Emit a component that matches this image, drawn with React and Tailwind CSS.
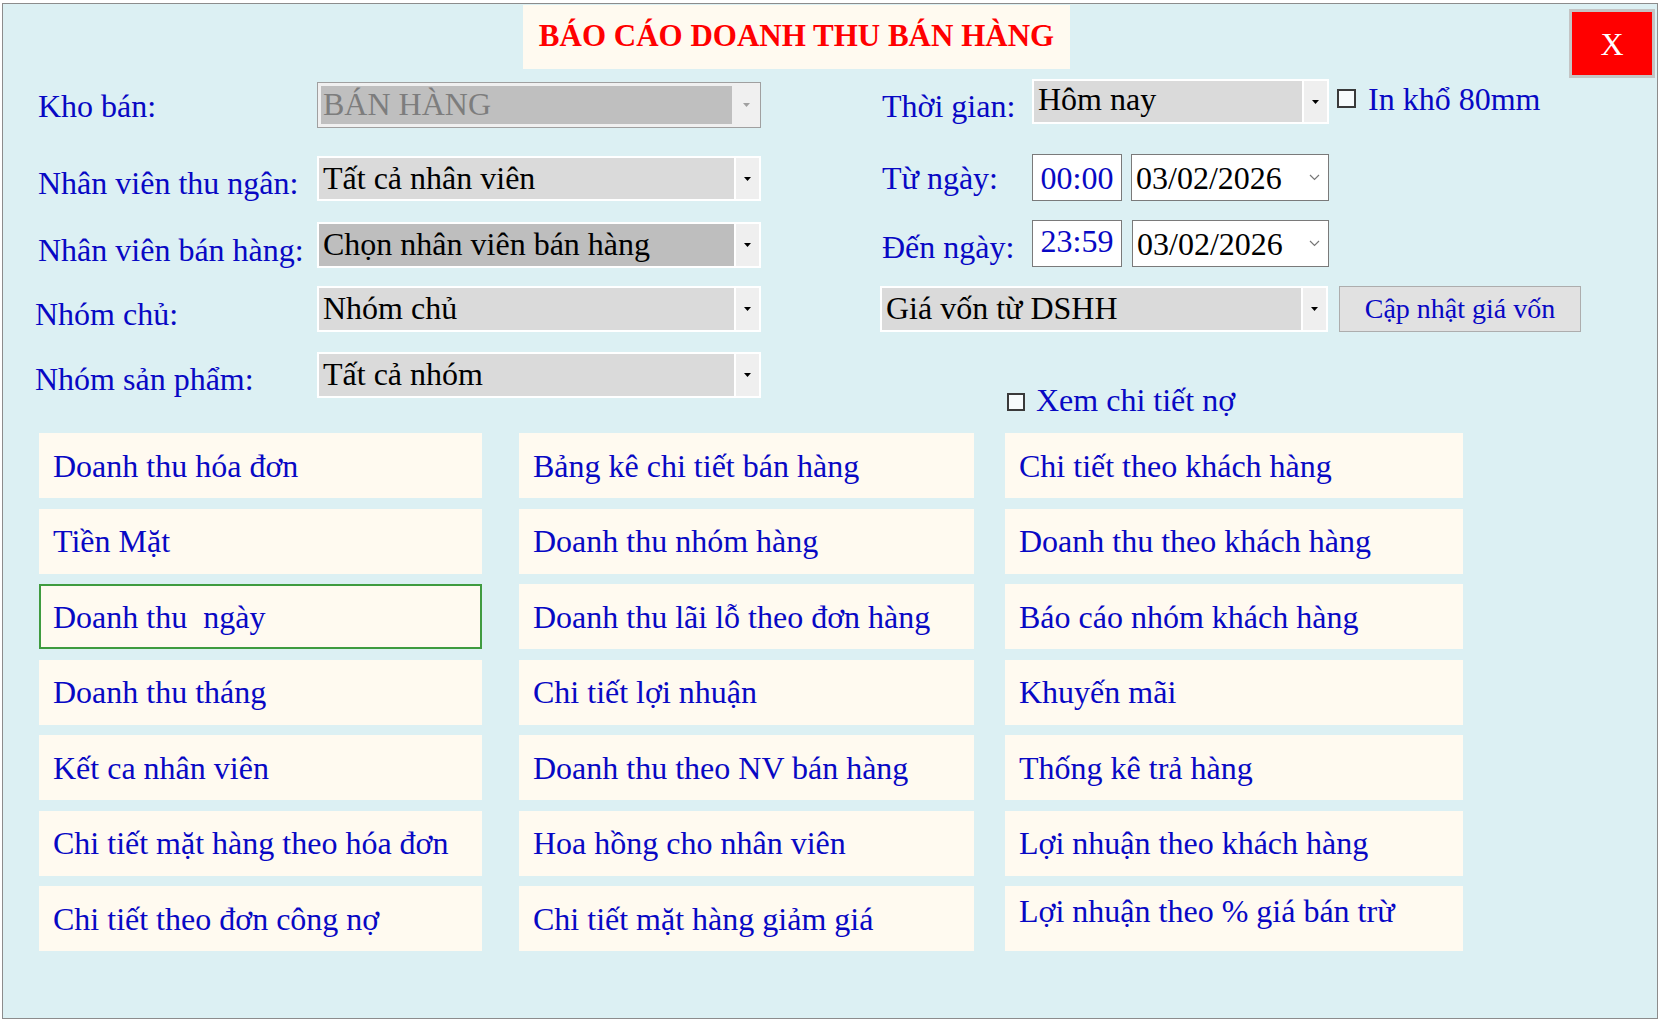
import React from "react";

function Arrow({ color = "#000" }) {
  return (
    <svg width="7" height="4" viewBox="0 0 7 4">
      <polygon points="0,0 7,0 3.5,4" fill={color} />
    </svg>
  );
}

function Chevron() {
  return (
    <svg width="11" height="7" viewBox="0 0 11 7">
      <polyline points="1,1 5.5,5.5 10,1" fill="none" stroke="#777" strokeWidth="1.2" />
    </svg>
  );
}

function Combo({ text, size, variant = "normal", textPad = "pt-[2px]" }) {
  if (variant === "disabled") {
    return (
      <div className={`flex border border-[#a0a0a0] bg-[#f0f0f0] ${size}`}>
        <div className={`my-[3px] ml-[3px] flex-1 bg-[#bfbfbf] pl-[2px] leading-[36px] text-[#7d7d7d] ${textPad}`}>
          {text}
        </div>
        <div className="flex w-[28px] items-center justify-center">
          <Arrow color="#a0a0a0" />
        </div>
      </div>
    );
  }
  const fieldBg = variant === "dark" ? "bg-[#bebebe]" : "bg-[#dadada]";
  return (
    <div className={`flex border-2 border-white bg-[#efefef] ${size}`}>
      <div className={`flex-1 pl-[4px] leading-[36px] text-black ${fieldBg} ${textPad}`}>{text}</div>
      <div className="flex w-[25px] items-center justify-center border-l-2 border-white">
        <Arrow />
      </div>
    </div>
  );
}

const col1 = [
  "Doanh thu hóa đơn",
  "Tiền Mặt",
  "Doanh thu  ngày",
  "Doanh thu tháng",
  "Kết ca nhân viên",
  "Chi tiết mặt hàng theo hóa đơn",
  "Chi tiết theo đơn công nợ",
];
const col2 = [
  "Bảng kê chi tiết bán hàng",
  "Doanh thu nhóm hàng",
  "Doanh thu lãi lỗ theo đơn hàng",
  "Chi tiết lợi nhuận",
  "Doanh thu theo NV bán hàng",
  "Hoa hồng cho nhân viên",
  "Chi tiết mặt hàng giảm giá",
];
const col3 = [
  "Chi tiết theo khách hàng",
  "Doanh thu theo khách hàng",
  "Báo cáo nhóm khách hàng",
  "Khuyến mãi",
  "Thống kê trả hàng",
  "Lợi nhuận theo khách hàng",
  "Lợi nhuận theo % giá bán trừ",
];

function ReportButton({ text, selected, top }) {
  if (selected) {
    return (
      <div className="flex h-[65px] items-center whitespace-pre border-2 border-[#3f9b3f] bg-[#fffaf0] pl-[12px] leading-[36px]">
        {text}
      </div>
    );
  }
  if (top) {
    return (
      <div className="flex h-[65px] items-start whitespace-pre bg-[#fffaf0] pl-[14px] pt-[7px] leading-[36px]">
        {text}
      </div>
    );
  }
  return (
    <div className="flex h-[65px] items-center whitespace-pre bg-[#fffaf0] pl-[14px] leading-[36px]">
      {text}
    </div>
  );
}

export default function App() {
  return (
    <div className="h-[1021px] w-[1660px] bg-white pl-[2px] pt-[3px] font-['Liberation_Serif','Times_New_Roman',serif] text-[32px] text-[#0808c4]">
      <div className="relative h-[1016px] w-[1656px] border border-[#8c8c8c] bg-[#dcf0f3]">
        {/* Close button */}
        <div className="absolute right-[2px] top-[5px] flex h-[69px] w-[86px] items-center justify-center border-[3px] border-[#c4c4c4] bg-[#ff0000] text-[32px] leading-none text-white">
          X
        </div>

        {/* Title */}
        <div className="ml-[520px] mt-[1px] flex h-[64px] w-[547px] items-center justify-center bg-[#fffaf0] pb-[1px] text-[31px] font-bold text-[#ff0000]">
          BÁO CÁO DOANH THU BÁN HÀNG
        </div>

        {/* Form */}
        <div className="flex h-[364px]">
          {/* Left column */}
          <div className="flex w-[758px] flex-col">
            <div className="mt-[13px] flex h-[46px]">
              <div className="w-[314px] pl-[35px] pt-[6px] leading-[36px]">Kho bán:</div>
              <Combo text="BÁN HÀNG" size="h-[46px] w-[444px]" variant="disabled" textPad="pt-0" />
            </div>
            <div className="mt-[28px] flex h-[45px]">
              <div className="w-[314px] pl-[35px] pt-[9px] leading-[36px]">Nhân viên thu ngân:</div>
              <Combo text="Tất cả nhân viên" size="h-[45px] w-[444px]" />
            </div>
            <div className="mt-[21px] flex h-[46px]">
              <div className="w-[314px] pl-[35px] pt-[10px] leading-[36px]">Nhân viên bán hàng:</div>
              <Combo text="Chọn nhân viên bán hàng" size="h-[46px] w-[444px]" variant="dark" />
            </div>
            <div className="mt-[18px] flex h-[46px]">
              <div className="w-[314px] pl-[32px] pt-[10px] leading-[36px]">Nhóm chủ:</div>
              <Combo text="Nhóm chủ" size="h-[46px] w-[444px]" />
            </div>
            <div className="mt-[20px] flex h-[46px]">
              <div className="w-[314px] pl-[32px] pt-[9px] leading-[36px]">Nhóm sản phẩm:</div>
              <Combo text="Tất cả nhóm" size="h-[46px] w-[444px]" />
            </div>
          </div>

          {/* Right column */}
          <div className="ml-[119px] flex w-[710px] flex-col">
            <div className="mt-[10px] flex h-[45px]">
              <div className="w-[152px] pl-[2px] pt-[9px] leading-[36px]">Thời gian:</div>
              <Combo text="Hôm nay" size="h-[45px] w-[297px]" textPad="pt-0" />
              <div className="ml-[8px] mt-[10px] h-[19px] w-[19px] border-2 border-[#3a3a3a] bg-[#f7fbfc]" />
              <div className="ml-[12px] pt-[2px] leading-[36px]">In khổ 80mm</div>
            </div>

            <div className="mt-[30px] flex h-[47px]">
              <div className="w-[152px] pl-[2px] pt-[6px] leading-[36px]">Từ ngày:</div>
              <div className="flex h-[47px] w-[90px] items-center justify-center border border-[#7a7a7a] bg-white leading-[36px]">
                00:00
              </div>
              <div className="ml-[9px] flex h-[47px] w-[198px] items-center justify-between border border-[#7a7a7a] bg-white pl-[4px] pr-[8px] leading-[36px] text-black">
                <span>03/02/2026</span>
                <Chevron />
              </div>
            </div>

            <div className="mt-[19px] flex h-[47px]">
              <div className="w-[152px] pl-[2px] pt-[9px] leading-[36px]">Đến ngày:</div>
              <div className="flex h-[47px] w-[90px] items-center justify-center border border-[#7a7a7a] bg-white pb-[6px] leading-[36px]">
                23:59
              </div>
              <div className="ml-[10px] flex h-[47px] w-[197px] items-center justify-between border border-[#7a7a7a] bg-white pl-[4px] pr-[8px] leading-[36px] text-black">
                <span>03/02/2026</span>
                <Chevron />
              </div>
            </div>

            <div className="mt-[19px] flex h-[46px]">
              <Combo text="Giá vốn từ DSHH" size="h-[46px] w-[448px]" />
              <div className="ml-[11px] flex h-[46px] w-[242px] items-center justify-center border border-[#adadad] bg-[#e1e1e1] text-[28px] leading-[32px]">
                Cập nhật giá vốn
              </div>
            </div>

            <div className="ml-[127px] mt-[50px] flex">
              <div className="mt-[11px] h-[18px] w-[18px] border-2 border-[#3a3a3a] bg-[#f7fbfc]" />
              <div className="ml-[11px] leading-[36px]">Xem chi tiết nợ</div>
            </div>
          </div>
        </div>

        {/* Report buttons */}
        <div className="ml-[36px] flex">
          <div className="flex w-[443px] flex-col gap-[10.5px]">
            {col1.map((t, i) => (
              <ReportButton key={t} text={t} selected={i === 2} />
            ))}
          </div>
          <div className="ml-[37px] flex w-[455px] flex-col gap-[10.5px]">
            {col2.map((t) => (
              <ReportButton key={t} text={t} />
            ))}
          </div>
          <div className="ml-[31px] flex w-[458px] flex-col gap-[10.5px]">
            {col3.map((t, i) => (
              <ReportButton key={t} text={t} top={i === 6} />
            ))}
          </div>
        </div>
      </div>
    </div>
  );
}
